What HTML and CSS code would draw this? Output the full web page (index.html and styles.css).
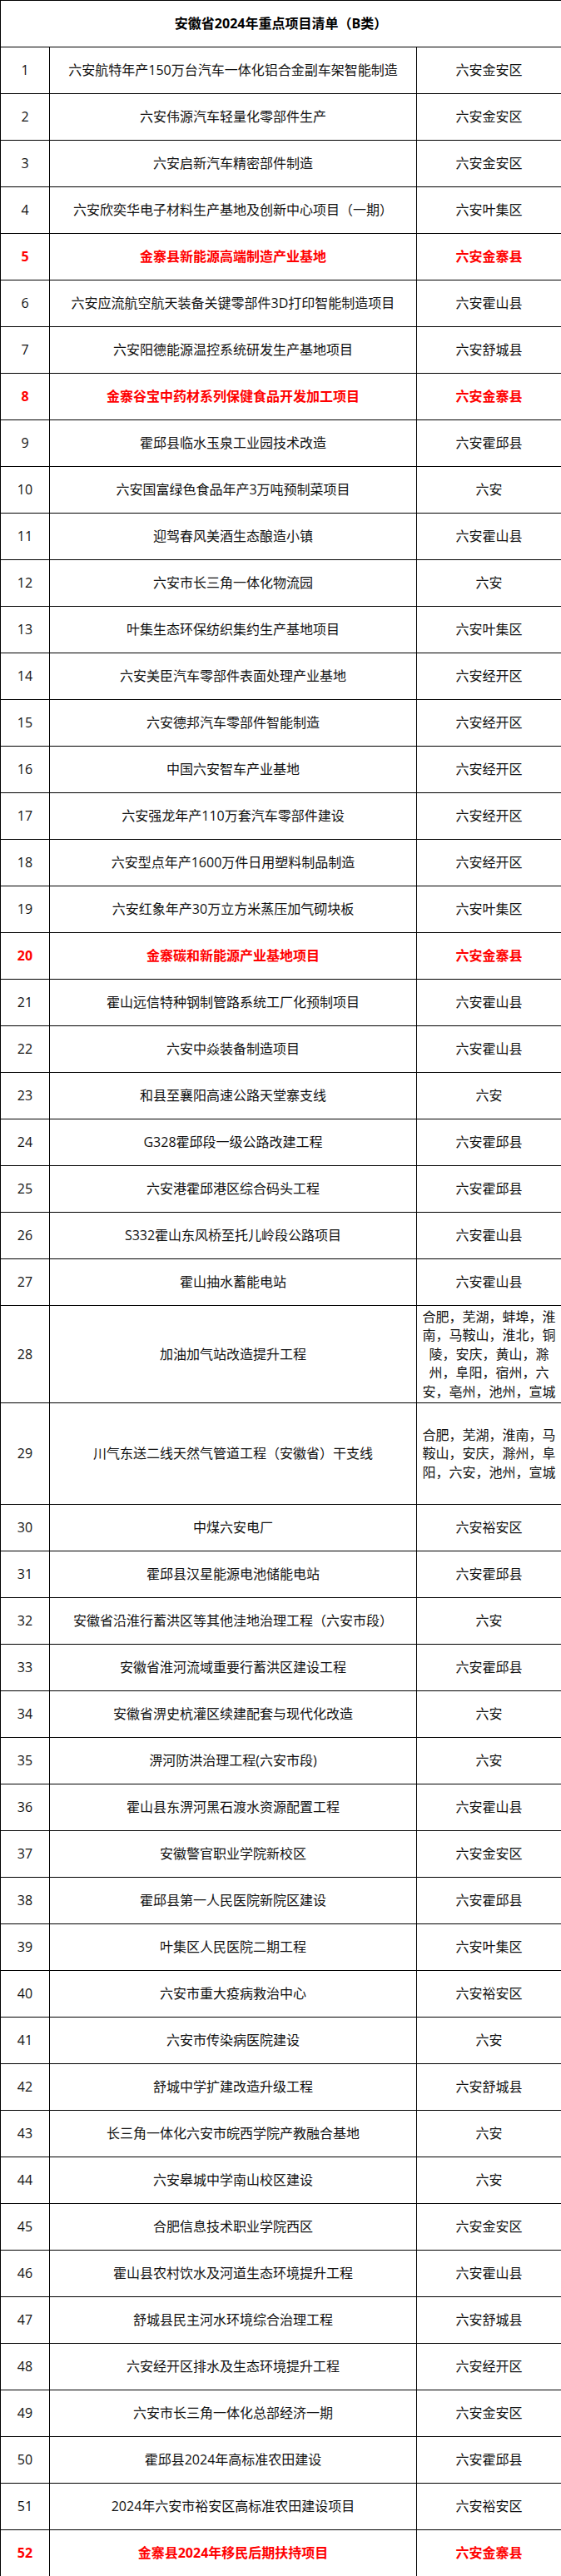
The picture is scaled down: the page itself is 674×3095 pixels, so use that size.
FILE: index.html
```html
<!DOCTYPE html>
<html lang="zh-CN">
<head>
<meta charset="utf-8">
<title>安徽省2024年重点项目清单（B类）</title>
<link rel="stylesheet" href="styles.css">
</head>
<body>
<table class="list">
  <colgroup>
    <col class="c-no">
    <col class="c-name">
    <col class="c-area">
  </colgroup>
  <thead>
    <tr class="title-row"><th colspan="3">安徽省2024年重点项目清单（B类）</th></tr>
  </thead>
  <tbody>
    <tr><td>1</td><td>六安航特年产150万台汽车一体化铝合金副车架智能制造</td><td>六安金安区</td></tr>
    <tr><td>2</td><td>六安伟源汽车轻量化零部件生产</td><td>六安金安区</td></tr>
    <tr><td>3</td><td>六安启新汽车精密部件制造</td><td>六安金安区</td></tr>
    <tr><td>4</td><td>六安欣奕华电子材料生产基地及创新中心项目（一期）</td><td>六安叶集区</td></tr>
    <tr class="hl"><td>5</td><td>金寨县新能源高端制造产业基地</td><td>六安金寨县</td></tr>
    <tr><td>6</td><td>六安应流航空航天装备关键零部件3D打印智能制造项目</td><td>六安霍山县</td></tr>
    <tr><td>7</td><td>六安阳德能源温控系统研发生产基地项目</td><td>六安舒城县</td></tr>
    <tr class="hl"><td>8</td><td>金寨谷宝中药材系列保健食品开发加工项目</td><td>六安金寨县</td></tr>
    <tr><td>9</td><td>霍邱县临水玉泉工业园技术改造</td><td>六安霍邱县</td></tr>
    <tr><td>10</td><td>六安国富绿色食品年产3万吨预制菜项目</td><td>六安</td></tr>
    <tr><td>11</td><td>迎驾春风美酒生态酿造小镇</td><td>六安霍山县</td></tr>
    <tr><td>12</td><td>六安市长三角一体化物流园</td><td>六安</td></tr>
    <tr><td>13</td><td>叶集生态环保纺织集约生产基地项目</td><td>六安叶集区</td></tr>
    <tr><td>14</td><td>六安美臣汽车零部件表面处理产业基地</td><td>六安经开区</td></tr>
    <tr><td>15</td><td>六安德邦汽车零部件智能制造</td><td>六安经开区</td></tr>
    <tr><td>16</td><td>中国六安智车产业基地</td><td>六安经开区</td></tr>
    <tr><td>17</td><td>六安强龙年产110万套汽车零部件建设</td><td>六安经开区</td></tr>
    <tr><td>18</td><td>六安型点年产1600万件日用塑料制品制造</td><td>六安经开区</td></tr>
    <tr><td>19</td><td>六安红象年产30万立方米蒸压加气砌块板</td><td>六安叶集区</td></tr>
    <tr class="hl"><td>20</td><td>金寨碳和新能源产业基地项目</td><td>六安金寨县</td></tr>
    <tr><td>21</td><td>霍山远信特种钢制管路系统工厂化预制项目</td><td>六安霍山县</td></tr>
    <tr><td>22</td><td>六安中焱装备制造项目</td><td>六安霍山县</td></tr>
    <tr><td>23</td><td>和县至襄阳高速公路天堂寨支线</td><td>六安</td></tr>
    <tr><td>24</td><td>G328霍邱段一级公路改建工程</td><td>六安霍邱县</td></tr>
    <tr><td>25</td><td>六安港霍邱港区综合码头工程</td><td>六安霍邱县</td></tr>
    <tr><td>26</td><td>S332霍山东风桥至托儿岭段公路项目</td><td>六安霍山县</td></tr>
    <tr><td>27</td><td>霍山抽水蓄能电站</td><td>六安霍山县</td></tr>
    <tr class="row-five"><td>28</td><td>加油加气站改造提升工程</td><td class="multi">合肥，芜湖，蚌埠，淮南，马鞍山，淮北，铜陵，安庆，黄山，滁州，阜阳，宿州，六安，亳州，池州，宣城</td></tr>
    <tr class="row-three"><td>29</td><td>川气东送二线天然气管道工程（安徽省）干支线</td><td class="multi">合肥，芜湖，淮南，马鞍山，安庆，滁州，阜阳，六安，池州，宣城</td></tr>
    <tr><td>30</td><td>中煤六安电厂</td><td>六安裕安区</td></tr>
    <tr><td>31</td><td>霍邱县汉星能源电池储能电站</td><td>六安霍邱县</td></tr>
    <tr><td>32</td><td>安徽省沿淮行蓄洪区等其他洼地治理工程（六安市段）</td><td>六安</td></tr>
    <tr><td>33</td><td>安徽省淮河流域重要行蓄洪区建设工程</td><td>六安霍邱县</td></tr>
    <tr><td>34</td><td>安徽省淠史杭灌区续建配套与现代化改造</td><td>六安</td></tr>
    <tr><td>35</td><td>淠河防洪治理工程(六安市段)</td><td>六安</td></tr>
    <tr><td>36</td><td>霍山县东淠河黑石渡水资源配置工程</td><td>六安霍山县</td></tr>
    <tr><td>37</td><td>安徽警官职业学院新校区</td><td>六安金安区</td></tr>
    <tr><td>38</td><td>霍邱县第一人民医院新院区建设</td><td>六安霍邱县</td></tr>
    <tr><td>39</td><td>叶集区人民医院二期工程</td><td>六安叶集区</td></tr>
    <tr><td>40</td><td>六安市重大疫病救治中心</td><td>六安裕安区</td></tr>
    <tr><td>41</td><td>六安市传染病医院建设</td><td>六安</td></tr>
    <tr><td>42</td><td>舒城中学扩建改造升级工程</td><td>六安舒城县</td></tr>
    <tr><td>43</td><td>长三角一体化六安市皖西学院产教融合基地</td><td>六安</td></tr>
    <tr><td>44</td><td>六安皋城中学南山校区建设</td><td>六安</td></tr>
    <tr><td>45</td><td>合肥信息技术职业学院西区</td><td>六安金安区</td></tr>
    <tr><td>46</td><td>霍山县农村饮水及河道生态环境提升工程</td><td>六安霍山县</td></tr>
    <tr><td>47</td><td>舒城县民主河水环境综合治理工程</td><td>六安舒城县</td></tr>
    <tr><td>48</td><td>六安经开区排水及生态环境提升工程</td><td>六安经开区</td></tr>
    <tr><td>49</td><td>六安市长三角一体化总部经济一期</td><td>六安金安区</td></tr>
    <tr><td>50</td><td>霍邱县2024年高标准农田建设</td><td>六安霍邱县</td></tr>
    <tr><td>51</td><td>2024年六安市裕安区高标准农田建设项目</td><td>六安裕安区</td></tr>
    <tr class="hl"><td>52</td><td>金寨县2024年移民后期扶持项目</td><td>六安金寨县</td></tr>
  </tbody>
</table>
</body>
</html>
```

FILE: styles.css
```css
html, body {
  margin: 0;
  padding: 0;
  background: #ffffff;
}

.list {
  width: 674px;
  border-collapse: collapse;
  table-layout: fixed;
  font-family: "Open Sans", "Noto Sans CJK SC", sans-serif;
  font-size: 16px;
  color: #111111;
}

.c-no { width: 59px; }
.c-name { width: 441px; }
.c-area { width: 174px; }

.list th,
.list td {
  border: 1px solid #000000;
  padding: 0 5px;
  text-align: center;
  vertical-align: middle;
  line-height: 22.5px;
}

.title-row {
  height: 56px;
}

.title-row th {
  font-weight: bold;
  color: #000000;
}

.list tbody tr {
  height: 56px;
}

.list tbody tr.row-five {
  height: 117px;
}

.list tbody tr.row-three {
  height: 122px;
}

.multi {
  padding: 0 6px;
}

.hl td {
  color: #ff0000;
  font-weight: bold;
}
```
